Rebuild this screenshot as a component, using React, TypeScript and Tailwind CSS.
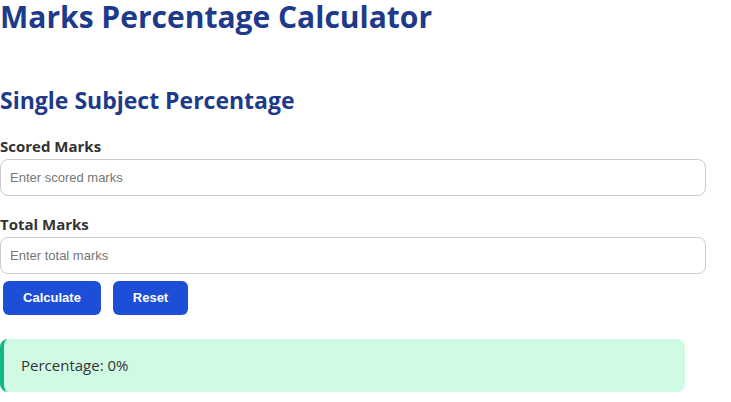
import React, { useState } from "react";

const App = () => {
  const [scored, setScored] = useState("");
  const [total, setTotal] = useState("");
  const [pct, setPct] = useState("0");

  const calc = () => {
    const s = parseFloat(scored);
    const t = parseFloat(total);
    if (!isNaN(s) && !isNaN(t) && t > 0) setPct(((s / t) * 100).toFixed(2));
  };

  const reset = () => {
    setScored("");
    setTotal("");
    setPct("0");
  };

  return (
    <div className="w-[731px] h-[402px] bg-white font-['Open_Sans',sans-serif] text-[#333]">
      <div className="w-[685px]">
        <h1 className="text-[30px] leading-[34px] font-bold text-[#1e3a8a]">
          Marks Percentage Calculator
        </h1>
        <h2 className="mt-[50px] text-[23px] leading-[32px] font-bold text-[#1e3a8a]">
          Single Subject Percentage
        </h2>

        <label className="block mt-[19px] text-[15px] leading-[22px] font-bold">Scored Marks</label>
        <input
          value={scored}
          onChange={(e) => setScored(e.target.value)}
          placeholder="Enter scored marks"
          className="block mt-[2px] w-[706px] h-[37px] px-[9px] border border-[#ccc] rounded-[8px] text-[13px] font-['Liberation_Sans',sans-serif] placeholder:text-[#757575] outline-none"
        />

        <label className="block mt-[17px] text-[15px] leading-[22px] font-bold">Total Marks</label>
        <input
          value={total}
          onChange={(e) => setTotal(e.target.value)}
          placeholder="Enter total marks"
          className="block mt-[2px] w-[706px] h-[37px] px-[9px] border border-[#ccc] rounded-[8px] text-[13px] font-['Liberation_Sans',sans-serif] placeholder:text-[#757575] outline-none"
        />

        <div className="flex gap-[12px] mt-[7px] ml-[3px]">
          <button
            onClick={calc}
            className="w-[98px] h-[34px] rounded-[6px] bg-[#1d4ed8] text-white text-[13px] font-bold font-['Liberation_Sans',sans-serif]"
          >
            Calculate
          </button>
          <button
            onClick={reset}
            className="w-[75px] h-[34px] rounded-[6px] bg-[#1d4ed8] text-white text-[13px] font-bold font-['Liberation_Sans',sans-serif]"
          >
            Reset
          </button>
        </div>

        <div className="mt-[24px] h-[53px] flex items-center pl-[17px] bg-[#d1fae5] border-l-4 border-[#10b981] rounded-[8px] text-[15px]">
          Percentage: {pct}%
        </div>
      </div>
    </div>
  );
};

export default App;
